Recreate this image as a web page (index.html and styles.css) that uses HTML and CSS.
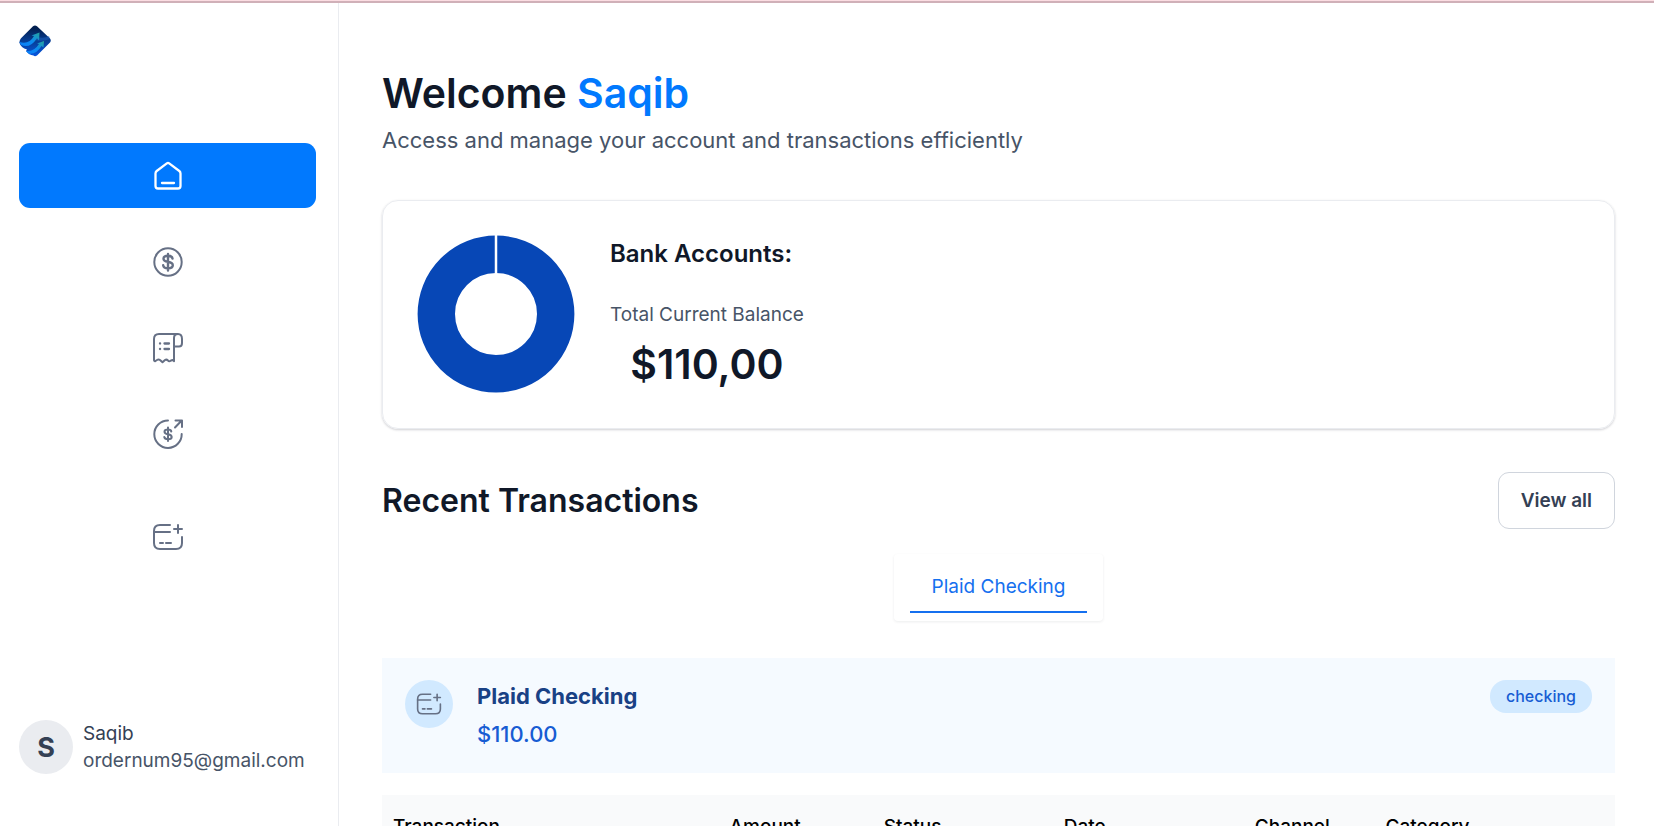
FILE: index.html
```html
<!DOCTYPE html>
<html lang="en">
<head>
<meta charset="utf-8">
<meta name="viewport" content="width=device-width, initial-scale=1">
<title>Dashboard</title>
<link rel="stylesheet" href="styles.css">
</head>
<body>
<svg class="defs" aria-hidden="true">
  <symbol id="card-plus" viewBox="0 0 32 32">
    <g fill="none" stroke="currentColor" stroke-width="2" stroke-linecap="round" stroke-linejoin="round">
      <path d="M18 4H8Q2 4 2 10V22Q2 28 8 28H24Q30 28 30 22V16"/>
      <path d="M2 11H18M22 8H30M26 4V12M8 22H11M14 22H19"/>
    </g>
  </symbol>
</svg>
<div class="app">
  <aside class="sidebar">
    <nav class="nav" aria-label="Main">
      <a class="logo" href="#" aria-label="Home page">
        <svg width="32" height="32" viewBox="0 0 32 32">
          <defs>
            <linearGradient id="lg" x1="0" y1="0" x2="0" y2="1"><stop offset="0.1" stop-color="#021f50"/><stop offset="0.45" stop-color="#063a8c"/><stop offset="1" stop-color="#0757e0"/></linearGradient>
            <linearGradient id="ar" x1="0" y1="1" x2="1" y2="0"><stop offset="0" stop-color="#0a7df8"/><stop offset="0.5" stop-color="#0c8cf0"/><stop offset="1" stop-color="#26a39b"/></linearGradient>
          </defs>
          <path d="M14 1.200Q16 -.4 18 1.200L31 13.500Q32.600 15.500 31 17.500L18 30.500Q16 32 14.500 30.600Q10 30 7 26L8 24.500Q2 23 .3 17.500Q.3 15.500 2 13.300Z" fill="url(#lg)"/>
          <path d="M18 12Q25 14 30 11L31 14Q24 17 15 15Z" fill="#1c5db5" opacity=".6"/>
          <path d="M.5 17Q10 20 15 11L12.500 10.500L20.500 7.500L20 15.500L18 13.200Q11 24 2 20Z" fill="url(#ar)"/>
          <path d="M7 26Q15 27 20 19L18 18.500L25 16L24.500 22.500L22.500 21Q17 30 9.500 28.500Z" fill="url(#ar)"/>
        </svg>
      </a>
      <a class="nav-link active" href="#" aria-label="Home">
        <svg class="icon" viewBox="0 0 32 32" fill="none" stroke="currentColor" stroke-width="2.300" stroke-linecap="round" stroke-linejoin="round"><path d="M14.800 3.400Q16 2.500 17.200 3.400L27.300 11Q28.500 12 28.500 13.500V26Q28.500 28.500 26 28.500H6Q3.500 28.500 3.500 26V13.500Q3.500 12 4.700 11ZM10 23H22"/></svg>
      </a>
      <a class="nav-link" href="#" aria-label="My Banks">
        <svg class="icon" viewBox="0 0 32 32" fill="none" stroke="currentColor" stroke-width="2" stroke-linecap="round" stroke-linejoin="round"><circle cx="16" cy="16" r="13.700"/><path d="M20.500 12.500Q20 9.800 16 9.800Q11.500 9.800 11.500 12.700Q11.500 15 16 15.800Q20.800 16.600 20.800 19.300Q20.800 22.300 16 22.300Q11.600 22.300 11.200 19.300M16 8V24.500" stroke-width="2.400"/></svg>
      </a>
      <a class="nav-link" href="#" aria-label="Transaction History">
        <svg class="icon" viewBox="0 0 32 32" fill="none" stroke="currentColor" stroke-width="2" stroke-linecap="round" stroke-linejoin="round"><path d="M25 2H7Q2 2 2 7V28Q2 29.500 3.500 29L5 28Q6.500 27 8 28L10.500 30.300L13 28Q14.500 27 16 28.500Q17 30 19 28.500Q21 27.500 22 29Q22 29.500 22 28V6Q22 2 26 2Q30 2 30 7V11Q30 14.500 27 14.500H22"/><path stroke-width="2.300" d="M8 11.500H8.100M12.500 11.500H17M8 17H8.100M12.500 17H17"/></svg>
      </a>
      <a class="nav-link" href="#" aria-label="Payment Transfer">
        <svg class="icon" viewBox="0 0 32 32" fill="none" stroke="currentColor" stroke-width="2" stroke-linecap="round" stroke-linejoin="round"><path d="M16 2.500A13.700 13.700 0 1 0 29.700 16M23 9.500L29.700 2.500M23.500 2.500H30V9"/><path d="M19.300 13.500Q19 11.500 16 11.500Q12.500 11.500 12.500 13.700Q12.500 15.600 16 16.200Q19.700 16.800 19.700 19Q19.700 21.200 16 21.200Q12.600 21.200 12.300 19M16 9.500V23"/></svg>
      </a>
      <a class="nav-link connect" href="#" aria-label="Connect bank">
        <svg class="icon"><use href="#card-plus"/></svg>
      </a>
    </nav>
    <footer class="user">
      <span class="avatar">S</span>
      <div class="user-text">
        <p class="user-name">Saqib</p>
        <p class="user-mail">ordernum95@gmail.com</p>
      </div>
    </footer>
  </aside>

  <main class="main">
    <header class="intro">
      <h1>Welcome <span class="accent">Saqib</span></h1>
      <p>Access and manage your account and transactions efficiently</p>
    </header>

    <section class="balance">
      <svg class="donut" viewBox="0 0 158 158" role="img" aria-label="Bank balances">
        <circle cx="79" cy="79" r="59.700" fill="none" stroke="#0747b6" stroke-width="37.400"/>
        <path d="M79 0V40" stroke="#fff" stroke-width="2.500"/>
      </svg>
      <div class="balance-text">
        <h2>Bank Accounts:</h2>
        <div class="total">
          <p class="total-label">Total Current Balance</p>
          <p class="total-amount">$110,00</p>
        </div>
      </div>
    </section>

    <section class="recent">
      <header class="recent-head">
        <h2>Recent Transactions</h2>
        <a class="view-all" href="#">View all</a>
      </header>
      <div class="tabs" role="tablist">
        <button class="tab" type="button" role="tab" aria-selected="true">Plaid Checking</button>
      </div>
      <div class="account">
        <span class="account-icon"><svg><use href="#card-plus"/></svg></span>
        <div class="account-text">
          <h3>Plaid Checking</h3>
          <p>$110.00</p>
        </div>
        <span class="pill">checking</span>
      </div>
      <table class="table">
        <colgroup><col class="c1"><col class="c2"><col class="c3"><col class="c4"><col class="c5"><col></colgroup>
        <thead>
          <tr><th scope="col">Transaction</th><th scope="col">Amount</th><th scope="col">Status</th><th scope="col">Date</th><th scope="col">Channel</th><th scope="col">Category</th></tr>
        </thead>
      </table>
    </section>
  </main>
</div>
</body>
</html>
```
FILE: styles.css
```css
* { box-sizing: border-box; }
body {
  margin: 0;
  background: #fff;
  color: #101828;
  font-family: Inter, "Liberation Sans", sans-serif;
  font-size: 19px;
  line-height: 27px;
}
h1, h2, h3, p { margin: 0; font-weight: 600; }
p { font-weight: 400; }
a { color: inherit; text-decoration: none; }
.defs { display: none; }

.app {
  display: flex;
  height: 100vh;
  overflow: hidden;
  border-top: 1px solid #fbdde2;
  box-shadow: inset 0 2px 0 #d0b0b8;
}

.sidebar {
  display: flex;
  flex-direction: column;
  justify-content: space-between;
  flex: 0 0 339px;
  margin-top: 2px;
  padding: 22px 22px 52px 19px;
  border-right: 1px solid #eaecf0;
}
.nav { display: flex; flex-direction: column; gap: 21px; }
.logo { height: 32px; margin-bottom: 65px; }
.logo svg { display: block; }
.nav-link {
  display: flex;
  justify-content: center;
  align-items: center;
  height: 65px;
  border-radius: 11px;
  color: #667085;
}
.nav-link.active { background: #0179fe; color: #fff; }
.connect { margin-top: 17px; }
.icon { width: 32px; height: 32px; }

.user { display: flex; align-items: center; gap: 10px; }
.avatar {
  display: grid;
  place-items: center;
  width: 54px;
  height: 54px;
  border-radius: 50%;
  background: #eaecf0;
  color: #344054;
  font-size: 27px;
  font-weight: 700;
}
.user-name { color: #344054; }
.user-mail { color: #475467; }

.main {
  flex: 1;
  min-width: 0;
  padding: 66px 39px 0 43px;
  overflow: hidden;
}
.intro h1 { font-size: 41px; line-height: 52px; }
.intro p { margin-top: 5px; font-size: 22px; line-height: 32px; color: #475467; }
.accent { color: #0179fe; }

.balance {
  display: flex;
  gap: 35px;
  margin-top: 44px;
  padding: 34px 34px 35px;
  border: 1px solid #eaecf0;
  border-radius: 16px;
  box-shadow: 0 1px 3px rgba(16, 24, 40, .1), 0 1px 2px rgba(16, 24, 40, .1);
}
.donut { width: 158px; height: 158px; flex: none; }
.balance-text { display: flex; flex-direction: column; gap: 31px; padding-top: 3px; }
.balance-text h2 { font-size: 24px; line-height: 32px; }
.total { text-align: center; }
.total-label { color: #475467; }
.total-amount { margin-top: 11px; font-size: 41px; line-height: 51px; font-weight: 600; }

.recent-head {
  display: flex;
  justify-content: space-between;
  align-items: center;
  margin-top: 43px;
}
.recent-head h2 { font-size: 32px; line-height: 40px; }
.view-all {
  padding: 14px 22px;
  border: 1px solid #d0d5dd;
  border-radius: 11px;
  color: #344054;
  font-weight: 600;
}
.tabs {
  width: fit-content;
  margin: 25px auto 0;
  padding: 9px 16px 8px;
  border-radius: 4px;
  box-shadow: 0 1px 3px rgba(16, 24, 40, .08);
}
.tab {
  display: block;
  padding: 10px 22px 11px;
  border: 0;
  border-bottom: 2px solid #1570ef;
  background: none;
  color: #1570ef;
  font: inherit;
}
.account {
  display: flex;
  align-items: flex-start;
  margin-top: 37px;
  padding: 22px 23px 23px;
  background: #f5faff;
}
.account-icon {
  display: grid;
  place-items: center;
  width: 48px;
  height: 48px;
  border-radius: 50%;
  background: #d1e9ff;
  color: #667085;
}
.account-icon svg { width: 26px; height: 26px; }
.account-text { flex: 1; margin-left: 24px; }
.account-text h3, .account-text p { font-size: 22px; line-height: 32px; }
.account-text h3 { font-weight: 700; color: #194185; }
.account-text p { margin-top: 6px; font-weight: 500; color: #175cd3; }
.pill {
  padding: 3px 16px;
  border-radius: 16px;
  background: #d1e9ff;
  color: #175cd3;
  font-size: 16px;
  font-weight: 500;
}
.table {
  width: 100%;
  margin-top: 22px;
  border-collapse: collapse;
  table-layout: fixed;
  background: #f9fafb;
  color: #000;
}
.table th {
  height: 63px;
  padding: 0 11px;
  text-align: left;
  font-weight: 500;
}
.c1 { width: 27.3%; }
.c2 { width: 12.5%; }
.c3 { width: 14.6%; }
.c4 { width: 15.5%; }
.c5 { width: 10.6%; }
```
